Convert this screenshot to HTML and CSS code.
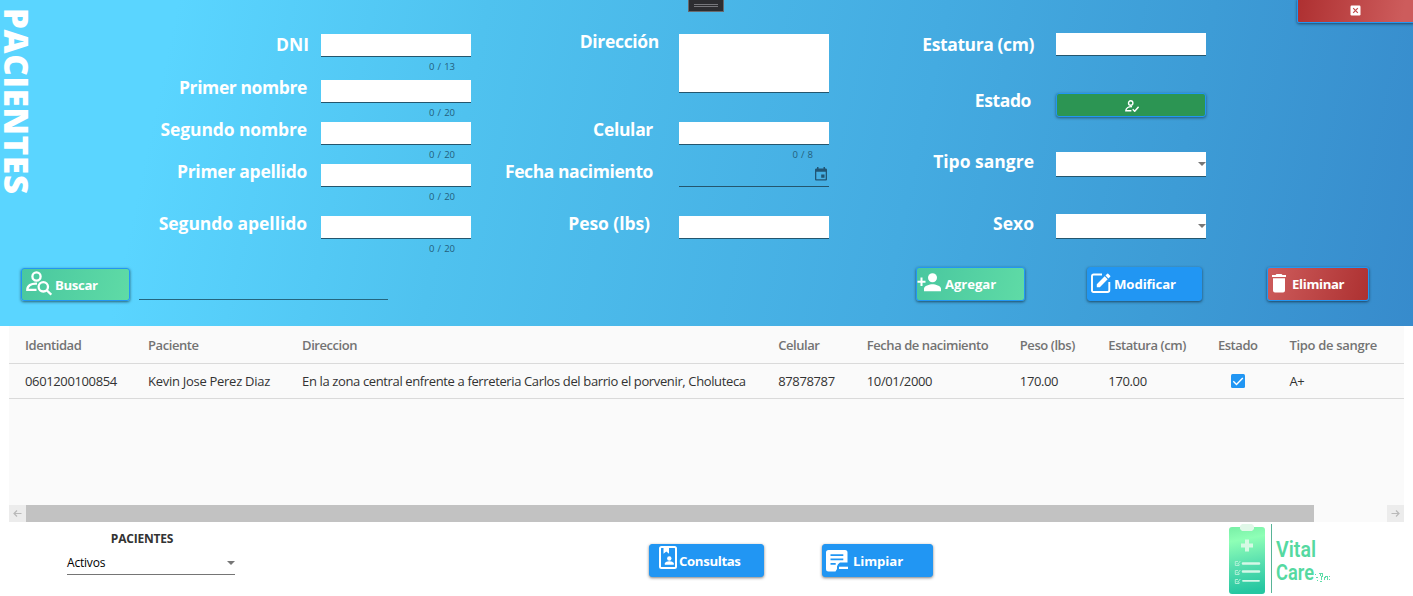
FILE: index.html
```
<!DOCTYPE html>
<html lang="es">
<head>
<meta charset="utf-8">
<title>Pacientes</title>
<link rel="stylesheet" href="styles.css">
</head>
<body>
<main class="app">
  <section class="panel">
    <h1 class="title">PACIENTES</h1>
    <div class="grip"><i></i><i></i></div>
    <button class="close" aria-label="Cerrar">
      <svg width="11" height="11" viewBox="0 0 11 11"><rect x=".5" y=".5" width="10" height="10" rx="1.2" fill="#fff"/><path d="M3.2 3.2l4.6 4.6M7.8 3.2L3.2 7.8" stroke="#c24a4b" stroke-width="1.2"/></svg>
    </button>

    <div class="form">
      <div class="column column-names">
        <div class="field dni"><label class="w-dni">DNI</label><div class="control"><div class="input"></div><span class="count">0 / 13</span></div></div>
        <div class="field"><label class="w-pn">Primer nombre</label><div class="control"><div class="input"></div><span class="count">0 / 20</span></div></div>
        <div class="field"><label class="w-sn">Segundo nombre</label><div class="control"><div class="input"></div><span class="count">0 / 20</span></div></div>
        <div class="field last-but-one"><label class="w-pa">Primer apellido</label><div class="control"><div class="input"></div><span class="count">0 / 20</span></div></div>
        <div class="field"><label class="w-sa">Segundo apellido</label><div class="control"><div class="input"></div><span class="count">0 / 20</span></div></div>
      </div>
      <div class="column column-contact">
        <div class="field address"><label class="w-dir">Dirección</label><div class="control"><div class="input area"></div></div></div>
        <div class="field"><label class="w-cel">Celular</label><div class="control"><div class="input"></div><span class="count">0 / 8</span></div></div>
        <div class="field last-but-one"><label class="w-fn">Fecha nacimiento</label><div class="control"><div class="input date">
          <svg width="12" height="14" viewBox="0 0 12 14"><path fill="#215574" fill-rule="evenodd" d="M2 0h1.5v1.4h5V0H10v1.4h.7c.7 0 1.3.6 1.3 1.3v9.5c0 .7-.6 1.3-1.3 1.3H1.3C.6 13.500 0 12.900 0 12.200V2.700c0-.7.6-1.3 1.300-1.300H2zM1.300 4.700v7.500h9.400V4.700zM6.200 7.500h3.300v3.300H6.200z"/></svg>
        </div></div></div>
        <div class="field"><label class="w-peso">Peso (lbs)</label><div class="control"><div class="input"></div></div></div>
      </div>
      <div class="column column-body">
        <div class="field height"><label class="w-est">Estatura (cm)</label><div class="control"><div class="input"></div></div></div>
        <div class="field state"><label class="w-estado">Estado</label><div class="control"><button class="toggle" aria-label="Estado">
          <svg width="14" height="12" viewBox="0 0 14 12" fill="none" stroke="#fff" stroke-width="1.4"><circle cx="5.700" cy="3" r="2.200"/><path d="M7 6.700C4 6.400.8 7.800.8 10.800H6.400M7.700 9.300l2 2L13.600 6.800"/></svg>
        </button></div></div>
        <div class="field blood"><label class="w-ts">Tipo sangre</label><div class="control"><div class="input select"><i class="caret"></i></div></div></div>
        <div class="field"><label class="w-sexo">Sexo</label><div class="control"><div class="input select"><i class="caret"></i></div></div></div>
      </div>
    </div>

    <div class="actions">
      <button class="btn green search">
        <svg width="26" height="25" viewBox="0 0 26 25" fill="none" stroke="#fff" stroke-width="2.300"><circle cx="10.500" cy="5.500" r="4.100"/><path d="M11 12.600C5 12.200 1.300 14.800 1.300 18.800H10.500"/><circle cx="17.300" cy="15.800" r="4.700"/><path d="M20.700 19.200l4.600 4.600"/></svg>
        <span class="t-buscar">Buscar</span>
      </button>
      <div class="query"></div>
      <button class="btn green add">
        <svg width="24" height="19" viewBox="0 0 24 19" fill="#fff"><circle cx="15.500" cy="4.800" r="4.500"/><path d="M7 18.300v-2.500c0-3 5.600-4.500 8.500-4.500s8.500 1.500 8.500 4.500v2.500zM3.500 4.500h2v3.200h3v2h-3v3.200h-2V9.700h-3v-2h3z"/></svg>
        <span>Agregar</span>
      </button>
      <button class="btn blue edit">
        <svg width="20" height="20" viewBox="0 0 20 20" fill="#fff"><path fill="none" stroke="#fff" stroke-width="1.900" d="M11 1.500H2.600Q1 1.500 1 3v14.500Q1 19 2.600 19H16.500q1.800 0 1.800-1.700V9"/><path d="M5.800 14.200v-3L13.700 3.300l3 3L8.800 14.200zM14.500 2.500l1.700-1.700q.5-.5 1 0l2 2q.5.500 0 1l-1.700 1.700z"/></svg>
        <span>Modificar</span>
      </button>
      <button class="btn red delete">
        <svg width="14" height="19" viewBox="0 0 14 19" fill="#fff"><path d="M0 1h3.500l1-1h5l1 1H14v2H0zM1 4.200h12v12.300q0 2-2 2H3q-2 0-2-2z"/></svg>
        <span class="t-eliminar">Eliminar</span>
      </button>
    </div>
  </section>

  <section class="grid">
    <table>
      <colgroup><col class="c1"><col class="c2"><col class="c3"><col class="c4"><col class="c5"><col class="c6"><col class="c7"><col class="c8"><col class="c9"></colgroup>
      <thead><tr><th>Identidad</th><th>Paciente</th><th>Direccion</th><th>Celular</th><th>Fecha de nacimiento</th><th>Peso (lbs)</th><th>Estatura (cm)</th><th>Estado</th><th class="th-blood">Tipo de sangre</th></tr></thead>
      <tbody><tr><td>0601200100854</td><td class="d-name">Kevin Jose Perez Diaz</td><td>En la zona central enfrente a ferreteria Carlos del barrio el porvenir, Choluteca</td><td>87878787</td><td>10/01/2000</td><td>170.00</td><td>170.00</td><td class="check"><svg width="14" height="14" viewBox="0 0 14 14"><rect width="14" height="14" rx="1.500" fill="#2196f3"/><path d="M2.300 7.300l3.200 3.200L11.800 4" fill="none" stroke="#fff" stroke-width="1.400"/></svg></td><td>A+</td></tr></tbody>
    </table>
    <div class="scrollbar">
      <span class="arrow"><svg width="9" height="7" viewBox="0 0 9 7" fill="none" stroke="#b9b9b9" stroke-width="1.200"><path d="M8.500 3.500H1M4 .5l-3 3 3 3"/></svg></span>
      <span class="thumb"></span>
      <span class="arrow right"><svg width="9" height="7" viewBox="0 0 9 7" fill="none" stroke="#b9b9b9" stroke-width="1.200"><path d="M.5 3.500H8M5 .5l3 3-3 3"/></svg></span>
    </div>
  </section>

  <footer class="footer">
    <div class="filter">
      <div class="filter-title">PACIENTES</div>
      <div class="filter-select"><span>Activos</span><i class="caret"></i></div>
    </div>
    <button class="btn flat visits">
      <svg width="18" height="23" viewBox="0 0 18 23"><rect x="1" y="1" width="16" height="21" rx="1.500" fill="none" stroke="#fff" stroke-width="2"/><path fill="#fff" d="M4.500 1.500h5.500v6.300L7.300 5.500 4.500 7.800z"/><circle cx="10.300" cy="12.500" r="2.200" fill="#fff"/><path fill="#fff" d="M5.800 18.800v-1.200c0-1.700 3-2.400 4.500-2.400s4.500.7 4.500 2.400v1.200z"/></svg>
      <span class="t-consultas">Consultas</span>
    </button>
    <button class="btn flat clear">
      <svg width="22" height="22" viewBox="0 0 22 22"><path fill="#fff" fill-rule="evenodd" d="M2.500 0h16.500q2.500 0 2.500 2.500v10H14q-2.500 1.500-3 4v2.500l-1.500 2.500H2.500Q0 21.500 0 19V2.500Q0 0 2.500 0zM4.500 4.200v1.700h12.800V4.200zM4.500 8.500v1.700h12.800V8.500zM4.500 13v1.700h5.200V13z"/><path fill="#fff" d="M13 16.700h9v2.300h-9z"/></svg>
      <span>Limpiar</span>
    </button>
    <svg class="logo" width="102" height="72" viewBox="0 0 102 72">
      <defs><linearGradient id="board" x1="0" y1="0" x2="0.100" y2="1"><stop offset="0" stop-color="#78efa6"/><stop offset=".22" stop-color="#8effb6"/><stop offset=".6" stop-color="#59dfaf"/><stop offset="1" stop-color="#26c7a1"/></linearGradient></defs>
      <rect x="1" y="4" width="36" height="67" rx="3" fill="url(#board)"/>
      <path d="M14 1h10l2 2v3l-2 2H14l-2-2V3z" fill="#e0f8e8"/>
      <path d="M17 17h4v4h4v4h-4v4h-4v-4h-4v-4h4z" transform="translate(0 -.5)" fill="#d5fae4"/>
      <g stroke="#d5f7e8" stroke-width="2.600" stroke-linecap="round"><path d="M15 40.500h16M15 48.500h16"/><path d="M15 57.800h16" stroke-width="1.800"/></g>
      <g fill="none" stroke="#b9f2db" stroke-width=".9"><path d="M10 38.500H7.300v4h3.800V41M8.500 40l1.300 1.300 2.500-3.300M10 47.500H7.300v4h3.800V50M8.500 49l1.300 1.300 2.500-3.300M10 56.500H7.300v4h3.800V59M8.500 58l1.300 1.300 2.500-3.300"/></g>
      <path d="M43.500 1v69" stroke="#58b497" stroke-width="1"/>
      <g class="logo-text"><text x="48" y="34" textLength="40" lengthAdjust="spacingAndGlyphs">Vital</text><text x="48" y="57" textLength="38" lengthAdjust="spacingAndGlyphs">Care</text></g>
      <path fill="#5fdca9" d="M87 51h1v1h-1zM88 54h2v1h-2zM89 57h1v1h-1zM91 50h4v1h-2v2h-1v-2h-1zM94 51h1v3h-1v3h-1v-4h1zM92 58h2v1h-2zM96 54h1v3h-1zM97 53h3v1h-2v1h-1zM99 54h1v3h-1zM101 53h1v1h-1zM101 56h1v1h-1z"/>
    </svg>
  </footer>
</main>
</body>
</html>
```

FILE: styles.css
```
* { box-sizing: border-box; }
body { margin: 0; background: #fff; font-family: "Open Sans", "Noto Sans", sans-serif; }
button { border: 0; padding: 0; font: inherit; color: #fff; }
svg { display: block; flex: none; }
.app { width: 1413px; height: 596px; overflow: hidden; display: flex; flex-direction: column; }

/* Top panel */
.panel { position: relative; height: 326px; flex: none; display: flex; flex-direction: column; overflow: hidden;
  background: linear-gradient(102deg, #5ad5ff 0%, #5ad5ff 12%, #4fc2ef 33%, #44abe1 64%, #3d9cd6 82%, #378bcc 100%); }
.title { position: absolute; left: 0; top: 8px; margin: 0; width: 33px; line-height: 33px; writing-mode: vertical-rl; color: #fff; font-size: 33px; font-weight: 800; letter-spacing: .75px; white-space: nowrap; }
.grip { position: absolute; left: 688px; top: 0; width: 36px; height: 12px; background: #2d2d30; border: 1px solid #69696d; border-top: 0; padding: 4px 5px; display: flex; flex-direction: column; gap: 1px; }
.grip i { height: 1px; background: #77777b; }
.close { position: absolute; right: -2px; top: -2px; width: 118px; height: 25px; border: 1px solid #2196f3; border-radius: 2px; background: linear-gradient(100deg, #ae3031, #cd5c5c 90%); box-shadow: 0 1px 3px rgba(0,0,0,.5); display: flex; align-items: center; justify-content: center; padding-right: 2px; }
.form { display: flex; height: 267px; padding-top: 33px; }
.column { display: flex; flex-direction: column; }
.column-names { width: 471px; padding-top: 1px; }
.column-contact { width: 358px; padding-top: 1px; }
.column-body { width: 377px; }
.field { display: flex; height: 42px; justify-content: flex-end; }
.field.dni { height: 46px; }
.field.last-but-one { height: 52px; }
.field.address { height: 88px; }
.field.height { height: 60px; }
.field.state { height: 59px; }
.field.blood { height: 62px; }
label { color: #fff; font-size: 17.500px; line-height: 25px; font-weight: 700; white-space: nowrap; margin: -5px 14px 0 0; }
.w-pn { letter-spacing: -.4px; }
.w-sn { letter-spacing: -.13px; }
.w-pa { letter-spacing: -.28px; }
.w-sa { letter-spacing: -.06px; }
.w-dir, .w-cel { letter-spacing: -.33px; }
.w-fn { letter-spacing: -.42px; }
.w-peso { letter-spacing: -.06px; }
.w-est { letter-spacing: -.4px; }
.w-estado { letter-spacing: -.4px; }
.dni label { margin: -2px 12px 0 0; }
.column-contact label { margin-right: 26px; }
.column-contact .address label { margin-right: 20px; }
.column-contact .w-peso { margin-right: 29px; }
.column-body label { margin: -3px 22px 0 0; }
.column-body .height label { margin-top: -1px; }
.column-body .state label { margin: -5px 25px 0 0; }
.control { width: 150px; display: flex; flex-direction: column; }
.input { height: 23px; background: #fff; border-bottom: 1px solid #24566e; flex: none; }
.area { height: 59px; }
.select { height: 25px; display: flex; justify-content: flex-end; padding-top: 10px; overflow: hidden; }
.date { background: none; display: flex; justify-content: flex-end; padding: 3px 2px 0 0; }
.caret { width: 0; height: 0; border: 4px solid transparent; border-top-color: #777; border-bottom: 0; }
.count { align-self: flex-end; margin: 3px 16px 0 0; font-size: 9.500px; line-height: 14px; color: #245f7c; white-space: nowrap; word-spacing: .6px; }
.toggle { margin: 0; width: 150px; height: 24px; flex: none; border: 1px solid #2196f3; border-radius: 3px; background: #2c9553; box-shadow: 0 1px 3px rgba(0,0,0,.45); display: flex; align-items: center; justify-content: center; padding: 1px 0 0 1px; }

/* Buttons */
.actions { display: flex; padding-left: 21px; align-items: flex-start; }
.btn { display: flex; height: 34px; border-radius: 3px; font-size: 13.200px; font-weight: 700; line-height: 34px; letter-spacing: -.1px; white-space: nowrap; border: 1px solid #2196f3; box-shadow: 0 1px 3px rgba(0,0,0,.55); flex: none; }
.btn span { line-height: 32px; }
.t-buscar, .t-eliminar, .t-consultas { letter-spacing: -.35px; }
.green { background: linear-gradient(105deg, #49c79f, #5fdba6); }
.blue { background: #2196f3; }
.red { background: linear-gradient(105deg, #cd5c5c, #ad3131); }
.flat { background: #2196f3; box-shadow: 0 1px 3px rgba(0,0,0,.5); }
.search { width: 109px; height: 33px; margin-top: 1px; padding-left: 4px; gap: 3px; }
.search svg { margin-top: 2px; }
.query { width: 249px; height: 33px; margin-left: 9px; border-bottom: 1px solid #24667f; }
.add { width: 109px; margin-left: 528px; gap: 4px; }
.add svg { margin-top: 5px; }
.edit { width: 115px; margin-left: 62px; padding-left: 3px; gap: 3px; }
.edit svg { margin-top: 5px; }
.delete { width: 102px; margin-left: 65px; padding-left: 4px; gap: 6px; }
.delete svg { margin-top: 6px; }

/* Patient table */
.grid { margin: 0 9px; height: 196px; flex: none; background: #fafafa; display: flex; flex-direction: column; justify-content: space-between; }
table { width: 1395px; table-layout: fixed; border-collapse: collapse; }
th, td { padding: 0 0 0 16px; text-align: left; white-space: nowrap; font-size: 13px; }
th { height: 37px; color: #737373; font-weight: 600; border-bottom: 1px solid #dadada; padding-top: 1px; letter-spacing: -.44px; }
.th-blood { letter-spacing: -.3px; }
td { height: 35px; color: #333; font-weight: 400; border-bottom: 1px solid #dadada; letter-spacing: -.37px; }
.d-name { letter-spacing: -.28px; }
.c1 { width: 123px; } .c2 { width: 154px; } .c3 { width: 476px; } .c4 { width: 88.500px; } .c5 { width: 153px; }
.c6 { width: 88.500px; } .c7 { width: 109.500px; } .c8 { width: 71.500px; } .c9 { width: 130.500px; }
.check { padding-left: 29px; }
.scrollbar { height: 17px; display: flex; }
.arrow { width: 17px; height: 17px; background: #ececec; display: flex; align-items: center; justify-content: center; }
.thumb { width: 1288px; background: #c2c2c2; }
.right { margin-left: auto; }

/* Footer */
.footer { height: 74px; display: flex; align-items: flex-start; }
.filter { width: 168px; margin-left: 67px; padding-top: 8px; }
.filter-title { text-align: center; font-size: 12px; line-height: 18px; font-weight: 700; color: #333; padding-right: 18px; letter-spacing: -.2px; }
.filter-select { display: flex; align-items: center; justify-content: space-between; height: 27px; border-bottom: 1px solid #757575; font-size: 12px; padding-top: 3px; color: #000; letter-spacing: -.2px; }
.visits { width: 115px; height: 33px; margin: 22px 0 0 414px; padding-left: 9px; gap: 2px; }
.visits svg { margin-top: 1px; }
.clear { width: 111px; height: 33px; margin: 22px 0 0 58px; padding-left: 3px; gap: 5px; }
.clear svg { margin-top: 5px; }
.logo { margin: 1px 0 0 295px; }
.logo-text { font-family: Roboto, sans-serif; font-size: 22px; font-weight: 600; fill: #55d9a1; }
```
